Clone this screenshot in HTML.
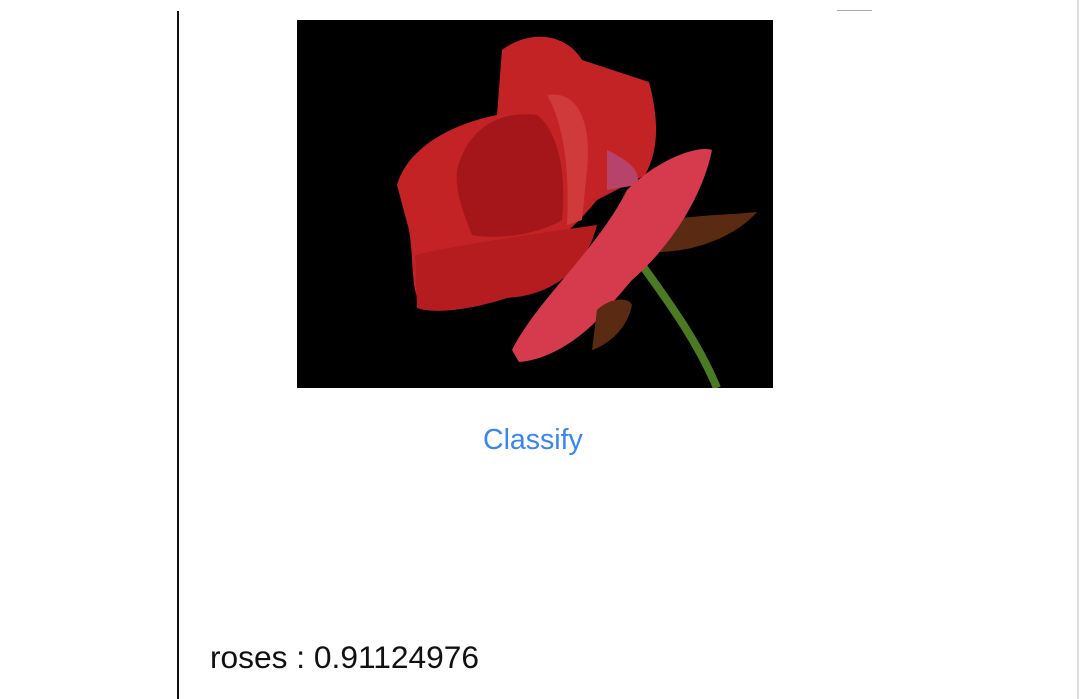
<!DOCTYPE html>
<html><head><meta charset="utf-8"><style>
html,body{margin:0;padding:0;width:1082px;height:699px;background:#fff;overflow:hidden;position:relative;font-family:"Liberation Sans",sans-serif}
.l{position:absolute;left:177px;top:11px;width:2px;height:688px;background:#111}
.r{position:absolute;left:1077px;top:0;width:2px;height:699px;background:#ddd}
.t{position:absolute;left:837px;top:10px;width:35px;height:1px;background:#aaa}
svg{position:absolute;left:297px;top:20px}
.c{position:absolute;left:483px;top:424px;font-size:28.5px;color:#3a86f0}
.res{position:absolute;left:210px;top:639px;font-size:31.7px;color:#111}
</style></head><body>
<div class="l"></div><div class="r"></div><div class="t"></div>
<svg width="476" height="368" viewBox="0 0 476 368">
<rect width="476" height="368" fill="#000"/>
<path d="M345,245 C370,280 400,320 420,368" stroke="#4a7a22" stroke-width="8" fill="none"/>
<path d="M370,200 C400,195 430,195 460,192 C440,215 400,232 360,232 Z" fill="#5a2a12"/>
<path d="M100,165 C110,130 150,105 200,95 L205,30 C235,8 270,15 285,40 L352,62 C362,100 362,130 348,155 L300,180 C260,230 200,265 130,290 C112,280 118,245 112,210 Z" fill="#c42325"/>
<path d="M118,235 C160,225 230,215 300,205 C290,245 260,275 210,278 C180,288 140,295 120,288 Z" fill="#b51c20"/>
<path d="M160,150 C170,110 200,90 240,95 C260,110 270,150 265,200 C240,215 200,220 175,215 C165,190 158,170 160,150 Z" fill="#a5161a"/>
<path d="M250,75 C280,70 295,100 290,150 L285,200 L270,205 C272,160 270,110 250,75 Z" fill="#d03a3a"/>
<path d="M310,130 C330,140 345,150 340,165 L310,170 Z" fill="#b8436a"/>
<path d="M215,330 C240,280 300,230 330,170 C360,140 400,125 415,130 C405,180 370,230 335,260 L305,295 C280,322 250,340 222,342 Z" fill="#d63a4d"/>
<path d="M300,290 C310,280 330,275 335,285 C330,310 310,325 295,330 Z" fill="#5a2a12"/>
</svg>
<div class="c">Classify</div>
<div class="res">roses : 0.91124976</div>
</body></html>
